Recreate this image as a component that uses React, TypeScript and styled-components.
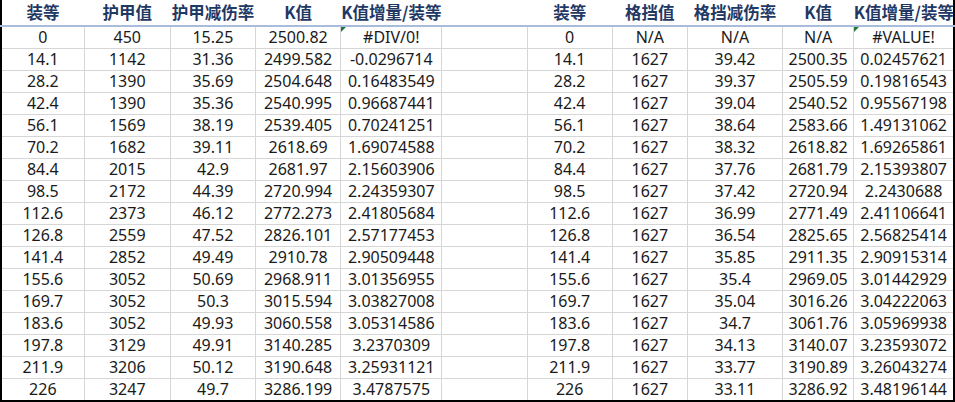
import React from "react";
import styled, { createGlobalStyle } from "styled-components";

const GlobalStyle = createGlobalStyle`
	html, body {
		margin: 0;
		padding: 0;
		background: #ffffff;
	}
	body {
		font-family: "Noto Sans", "Noto Sans CJK SC", sans-serif;
	}
`;

const widths = [83, 86, 85, 85, 101, 85, 85, 75, 95, 71, 100];

const headers = [
	"装等",
	"护甲值",
	"护甲减伤率",
	"K值",
	"K值增量/装等",
	"",
	"装等",
	"格挡值",
	"格挡减伤率",
	"K值",
	"K值增量/装等",
];

const armor = [
	["0", "450", "15.25", "2500.82", "#DIV/0!"],
	["14.1", "1142", "31.36", "2499.582", "-0.0296714"],
	["28.2", "1390", "35.69", "2504.648", "0.16483549"],
	["42.4", "1390", "35.36", "2540.995", "0.96687441"],
	["56.1", "1569", "38.19", "2539.405", "0.70241251"],
	["70.2", "1682", "39.11", "2618.69", "1.69074588"],
	["84.4", "2015", "42.9", "2681.97", "2.15603906"],
	["98.5", "2172", "44.39", "2720.994", "2.24359307"],
	["112.6", "2373", "46.12", "2772.273", "2.41805684"],
	["126.8", "2559", "47.52", "2826.101", "2.57177453"],
	["141.4", "2852", "49.49", "2910.78", "2.90509448"],
	["155.6", "3052", "50.69", "2968.911", "3.01356955"],
	["169.7", "3052", "50.3", "3015.594", "3.03827008"],
	["183.6", "3052", "49.93", "3060.558", "3.05314586"],
	["197.8", "3129", "49.91", "3140.285", "3.2370309"],
	["211.9", "3206", "50.12", "3190.648", "3.25931121"],
	["226", "3247", "49.7", "3286.199", "3.4787575"],
];

const block = [
	["0", "N/A", "N/A", "N/A", "#VALUE!"],
	["14.1", "1627", "39.42", "2500.35", "0.02457621"],
	["28.2", "1627", "39.37", "2505.59", "0.19816543"],
	["42.4", "1627", "39.04", "2540.52", "0.95567198"],
	["56.1", "1627", "38.64", "2583.66", "1.49131062"],
	["70.2", "1627", "38.32", "2618.82", "1.69265861"],
	["84.4", "1627", "37.76", "2681.79", "2.15393807"],
	["98.5", "1627", "37.42", "2720.94", "2.2430688"],
	["112.6", "1627", "36.99", "2771.49", "2.41106641"],
	["126.8", "1627", "36.54", "2825.65", "2.56825414"],
	["141.4", "1627", "35.85", "2911.35", "2.90915314"],
	["155.6", "1627", "35.4", "2969.05", "3.01442929"],
	["169.7", "1627", "35.04", "3016.26", "3.04222063"],
	["183.6", "1627", "34.7", "3061.76", "3.05969938"],
	["197.8", "1627", "34.13", "3140.07", "3.23593072"],
	["211.9", "1627", "33.77", "3190.89", "3.26043274"],
	["226", "1627", "33.11", "3286.92", "3.48196144"],
];

export default function App() {
	return (
		<>
			<GlobalStyle />
			<Sheet>
				<colgroup>
					{widths.map((w, i) => (
						<col key={i} style={{ width: w }} />
					))}
				</colgroup>
				<thead>
					<tr>
						{headers.map((h, i) => (
							<HeadCell key={i}>{h}</HeadCell>
						))}
					</tr>
				</thead>
				<tbody>
					{armor.map((row, r) => (
						<Row key={r}>
							{row.map((v, c) => (
								<Cell key={c} $flag={r === 0 && c === 4}>
									{v}
								</Cell>
							))}
							<Cell />
							{block[r].map((v, c) => (
								<Cell key={"b" + c} $flag={r === 0 && c === 4}>
									{v}
								</Cell>
							))}
						</Row>
					))}
				</tbody>
			</Sheet>
		</>
	);
}

const Sheet = styled.table`
	width: 955px;
	table-layout: fixed;
	border-collapse: collapse;
	border-left: 2px solid #000;
	border-right: 2px solid #000;
	border-bottom: 3px solid #000;
	color: #1a1a1a;
`;

const HeadCell = styled.th`
	height: 25px;
	padding: 0;
	font-family: "Noto Sans CJK SC", sans-serif;
	font-size: 16.5px;
	font-weight: 700;
	line-height: 25px;
	color: #1f3864;
	text-align: center;
	white-space: nowrap;
	border-bottom: 2px solid #a9bcdc;
`;

const Row = styled.tr`
	height: 22px;
`;

const Cell = styled.td<{ $flag?: boolean }>`
	position: relative;
	height: 21px;
	padding: 0;
	font-size: 16px;
	line-height: 21px;
	text-align: center;
	white-space: nowrap;
	border-right: 1px solid #d6d6d6;
	border-bottom: 1px solid #d6d6d6;

	&:last-child {
		border-right: none;
	}

	&::before {
		content: "";
		display: ${(p) => (p.$flag ? "block" : "none")};
		position: absolute;
		top: 0;
		left: 0;
		border-top: 5px solid #1e7a3c;
		border-right: 5px solid transparent;
	}
`;
